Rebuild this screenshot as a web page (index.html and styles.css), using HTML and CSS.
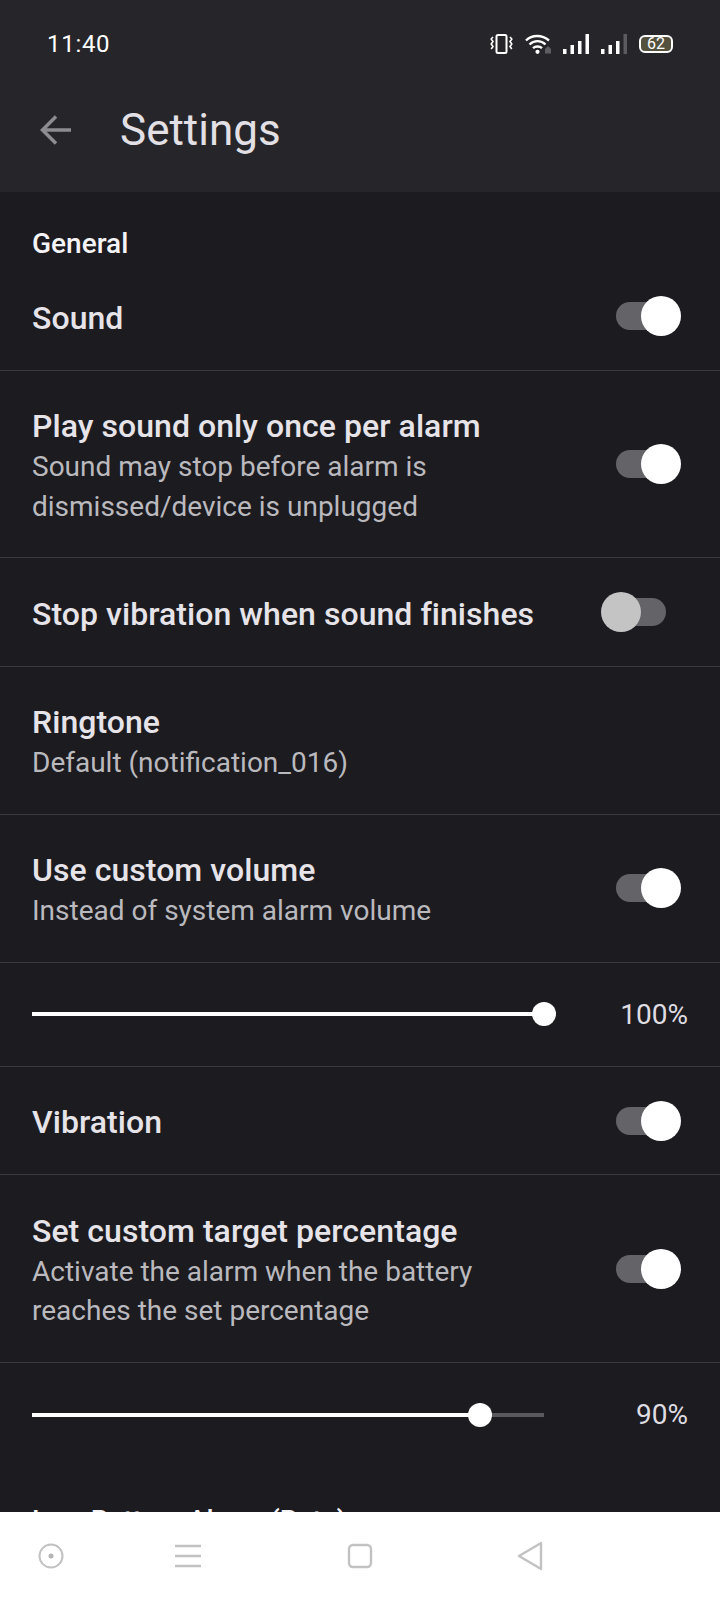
FILE: index.html
```html
<!DOCTYPE html>
<html lang="en">
<head>
<meta charset="utf-8">
<title>Settings</title>
<link rel="stylesheet" href="styles.css">
</head>
<body>
<header class="appbar">
  <div class="status">
    <span class="time">11:40</span>
    <div class="status-icons">
      <svg width="23" height="20" viewBox="0 0 23 20"><rect x="6.500" y="1" width="10" height="18" rx="1.500" fill="none" stroke="#fff" stroke-width="2"/><path d="M3 3 l-1.800 2 1.800 2.500 -1.800 2.500 1.800 2.500 -1.800 2.500 M20 3 l1.800 2 -1.800 2.500 1.800 2.500 -1.800 2.500 1.800 2.500" fill="none" stroke="#fff" stroke-width="1.600"/></svg>
      <svg width="26" height="20" viewBox="0 0 26 20"><path d="M1 6.500 C7 .5 17 .5 24 6.500 M4.500 10.500 C9 6 16 6 20.500 10.500 M8 14.200 C10.500 12 14.500 12 17 14.200" fill="none" stroke="#fff" stroke-width="2.400"/><circle cx="12.500" cy="17.800" r="2.100" fill="#fff"/><path d="M23 12 l3 3 v4.500 h-6 v-4.500 z" fill="#5e5d61"/></svg>
      <svg width="26" height="20" viewBox="0 0 26 20"><rect x="0" y="15" width="3.500" height="5" fill="#fff"/><rect x="7.500" y="11" width="3.500" height="9" fill="#fff"/><rect x="15" y="7" width="3.500" height="13" fill="#fff"/><rect x="22.500" y="0" width="3.500" height="20" fill="#fff"/></svg>
      <svg width="26" height="20" viewBox="0 0 26 20"><rect x="0" y="15" width="3.500" height="5" fill="#fff"/><rect x="7.500" y="11" width="3.500" height="9" fill="#fff"/><rect x="15" y="7" width="3.500" height="13" fill="#fff"/><rect x="22.500" y="0" width="3.500" height="20" fill="#5c5b60"/></svg>
      <div class="battery"><span class="battery-level">62</span></div>
    </div>
  </div>
  <div class="toolbar">
    <svg width="32" height="32" viewBox="0 0 32 32"><path d="M31 16 H3 M16 2.500 L2.500 16 L16 29.500" fill="none" stroke="#8d8c90" stroke-width="3.500"/></svg>
    <h1 class="page-title">Settings</h1>
  </div>
</header>

<main class="content">
  <h2 class="section">General</h2>

  <div class="row">
    <div class="text"><div class="title">Sound</div></div>
    <span class="switch on"></span>
  </div>
  <div class="row">
    <div class="text">
      <div class="title">Play sound only once per alarm</div>
      <div class="sub">Sound may stop before alarm is<br>dismissed/device is unplugged</div>
    </div>
    <span class="switch on"></span>
  </div>
  <div class="row">
    <div class="text"><div class="title">Stop vibration when sound finishes</div></div>
    <span class="switch"></span>
  </div>
  <div class="row">
    <div class="text">
      <div class="title">Ringtone</div>
      <div class="sub">Default (notification_016)</div>
    </div>
  </div>
  <div class="row">
    <div class="text">
      <div class="title">Use custom volume</div>
      <div class="sub">Instead of system alarm volume</div>
    </div>
    <span class="switch on"></span>
  </div>
  <div class="slider-row">
    <div class="slider"><div class="fill" style="width:100%"></div></div>
    <span class="value">100%</span>
  </div>
  <div class="row">
    <div class="text"><div class="title">Vibration</div></div>
    <span class="switch on"></span>
  </div>
  <div class="row">
    <div class="text">
      <div class="title">Set custom target percentage</div>
      <div class="sub">Activate the alarm when the battery<br>reaches the set percentage</div>
    </div>
    <span class="switch on"></span>
  </div>
  <div class="slider-row last">
    <div class="slider"><div class="fill" style="width:87.5%"></div></div>
    <span class="value">90%</span>
  </div>
  <h2 class="section next">Low Battery Alarm (Beta)</h2>
</main>

<nav class="navbar">
  <svg width="28" height="28" viewBox="0 0 28 28"><circle cx="14" cy="14" r="11.500" fill="none" stroke="#c2c2c2" stroke-width="2"/><circle cx="14" cy="14" r="2.500" fill="#b5b5b5"/></svg>
  <svg width="26" height="26" viewBox="0 0 26 26"><path d="M0 3 H26 M0 13 H26 M0 23 H26" stroke="#c2c2c2" stroke-width="2.400"/></svg>
  <svg width="26" height="26" viewBox="0 0 26 26"><rect x="2" y="2" width="22" height="22" rx="4" fill="none" stroke="#c2c2c2" stroke-width="2.400"/></svg>
  <svg width="28" height="30" viewBox="0 0 28 30"><path d="M25 2 V28 L3 15 Z" fill="none" stroke="#c2c2c2" stroke-width="2.400" stroke-linejoin="round"/></svg>
</nav>
</body>
</html>
```

FILE: styles.css
```css
* { box-sizing: border-box; }
html, body { margin: 0; padding: 0; }
body {
  width: 720px;
  height: 1600px;
  display: flex;
  flex-direction: column;
  overflow: hidden;
  background: #1c1b20;
  font-family: Roboto, "Noto Sans", sans-serif;
  color: #e6e4e9;
}
.appbar {
  flex: none;
  height: 192px;
  background: #26252a;
}
.status {
  height: 88px;
  padding: 0 47px;
  display: flex;
  align-items: center;
  justify-content: space-between;
}
.time { font-size: 24px; color: #fff; letter-spacing: 0.7px; }
.status-icons {
  display: flex;
  align-items: center;
  gap: 12px;
}
.battery {
  width: 34px;
  height: 18px;
  border: 2px solid #fff;
  border-radius: 6px;
  background: #55513f;
  display: flex;
  align-items: center;
  justify-content: center;
}
.battery-level { font-size: 16px; line-height: 14px; color: #fff; }
.toolbar {
  height: 84px;
  padding-left: 40px;
  display: flex;
  align-items: center;
  gap: 48px;
}
.page-title {
  margin: 0;
  font-size: 44px;
  font-weight: 400;
  color: #e2e0e5;
}
.content {
  flex: 1;
  min-height: 0;
  overflow: hidden;
}
.section {
  margin: 0;
  padding: 33px 32px 0;
  font-size: 28px;
  line-height: 37px;
  font-weight: 500;
  color: #f4f3f6;
}
.section.next { padding-top: 0; line-height: 39px; white-space: nowrap; }
.row {
  display: flex;
  align-items: center;
  justify-content: space-between;
  padding: 35.5px 54px 32px 32px;
  border-bottom: 1px solid #3a393e;
}
.title {
  font-size: 32px;
  line-height: 40px;
  font-weight: 500;
  letter-spacing: 0.05px;
  color: #e6e4e9;
}
.sub {
  margin: 1px 0 -1px;
  font-size: 28px;
  line-height: 39.5px;
  color: #bab9be;
}
.switch {
  position: relative;
  flex: none;
  width: 50px;
  height: 28px;
  margin-bottom: 3px;
  border-radius: 14px;
  background: #646368;
}
.switch::after {
  content: "";
  position: absolute;
  top: -6px;
  left: -15px;
  width: 40px;
  height: 40px;
  border-radius: 50%;
  background: #c4c4c4;
}
.switch.on::after { left: 25px; background: #fff; }
.slider-row {
  display: flex;
  align-items: center;
  justify-content: space-between;
  height: 104px;
  padding: 0 32px;
  border-bottom: 1px solid #3a393e;
}
.slider-row.last { height: 138px; padding-bottom: 34px; border-bottom: 0; }
.slider {
  width: 512px;
  height: 4px;
  background: #5a595e;
}
.fill {
  position: relative;
  height: 100%;
  background: #fff;
}
.fill::after {
  content: "";
  position: absolute;
  right: -12px;
  top: -10px;
  width: 24px;
  height: 24px;
  border-radius: 50%;
  background: #fff;
}
.value { font-size: 28px; color: #dfdde2; }
.navbar {
  flex: none;
  height: 88px;
  background: #fff;
  display: grid;
  grid-template-columns: 138px 172px 169px 28px;
  align-items: center;
  justify-items: start;
  padding: 0 0 0 37px;
}
```
